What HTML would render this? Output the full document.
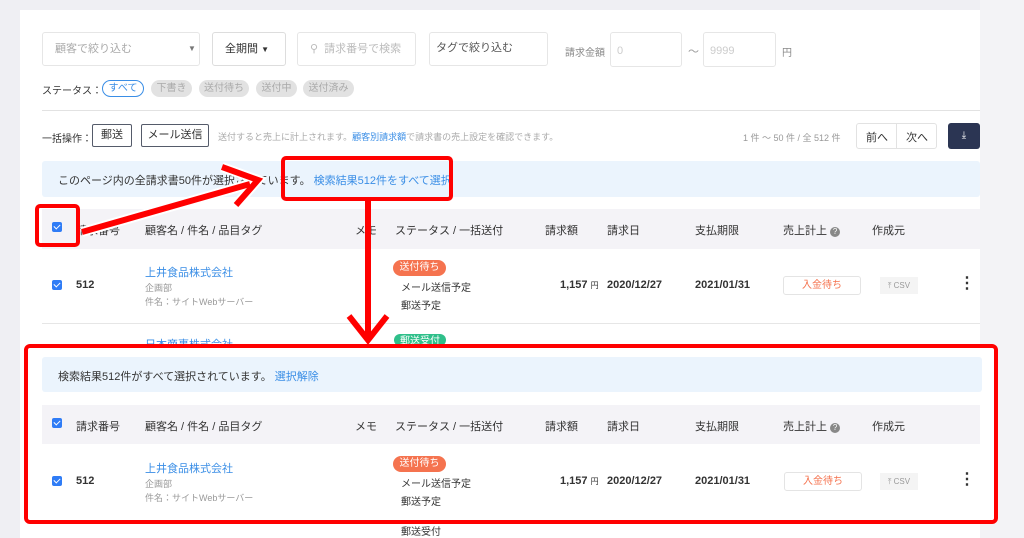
<!DOCTYPE html>
<html><head><meta charset="utf-8"><style>
*{margin:0;padding:0;box-sizing:border-box}
body{width:1024px;height:538px;overflow:hidden;background:#efeff3;font-family:"Liberation Sans","Noto Sans CJK JP",sans-serif;color:#333;position:relative}
.a{position:absolute;white-space:nowrap}
.card{position:absolute;left:20px;top:10px;width:960px;height:528px;background:#fff}
.inp{position:absolute;border:1px solid #e6e6e6;border-radius:3px;background:#fff;font-size:11px;color:#aaa;line-height:32px;padding-left:12px}
.pill{position:absolute;top:80px;height:17px;border-radius:9px;background:#e2e2e2;color:#aaa;font-size:10px;line-height:17px;text-align:center}
.btn{position:absolute;border:1px solid #555b6a;border-radius:2px;font-size:11px;line-height:21px;text-align:center;color:#333}
.cb{position:absolute;width:10px;height:10px;background:#2f7cf6;border-radius:2px}
.cb:after{content:"";position:absolute;left:3px;top:1px;width:3px;height:5px;border:solid #fff;border-width:0 1.5px 1.5px 0;transform:rotate(45deg)}
.th{font-size:11px;color:#333}
.badge{position:absolute;height:16px;border-radius:8px;color:#fff;font-size:10px;line-height:16px;text-align:center}
.sm{font-size:10px;color:#333}
.g{font-size:9px;color:#999}
.link{color:#3a8ee6}
</style></head><body>
<div class="card"></div>
<div style="position:absolute;left:980px;top:0;width:44px;height:538px;background:#f3f3f6"></div>

<div class="inp" style="left:42px;top:32px;width:158px;height:34px">顧客で絞り込む<span class="a" style="left:145px;top:0;font-size:8px;color:#777">▼</span></div>
<div class="inp" style="left:212px;top:32px;width:74px;height:34px;color:#333;border-color:#ddd">全期間 <span style="font-size:8px">▼</span></div>
<div class="inp" style="left:297px;top:32px;width:119px;height:34px;color:#bbb">⚲&nbsp; 請求番号で検索</div>
<div class="inp" style="left:429px;top:32px;width:119px;height:34px;color:#555;padding-left:6px;line-height:30px">タグで絞り込む</div>
<span class="a" style="left:565px;top:44px;font-size:10px;color:#888">請求金額</span>
<div class="inp" style="left:610px;top:32px;width:72px;height:35px;color:#ccc;padding-left:6px;line-height:36px">0</div>
<span class="a" style="left:688px;top:43px;font-size:11px;color:#999">～</span>
<div class="inp" style="left:703px;top:32px;width:73px;height:35px;color:#ccc;padding-left:6px;line-height:36px">9999</div>
<span class="a" style="left:782px;top:44px;font-size:10px;color:#888">円</span>

<span class="a" style="left:42px;top:82px;font-size:10px;color:#333">ステータス：</span>
<div class="pill" style="left:102px;width:42px;background:#fff;border:1px solid #3a8ee6;color:#3a8ee6;line-height:15px">すべて</div>
<div class="pill" style="left:151px;width:41px">下書き</div>
<div class="pill" style="left:199px;width:50px">送付待ち</div>
<div class="pill" style="left:256px;width:41px">送付中</div>
<div class="pill" style="left:303px;width:51px">送付済み</div>
<div class="a" style="left:42px;top:110px;width:938px;height:1px;background:#e2e2e2"></div>

<span class="a" style="left:42px;top:130px;font-size:10px">一括操作：</span>
<div class="btn" style="left:92px;top:124px;width:40px;height:23px">郵送</div>
<div class="btn" style="left:141px;top:124px;width:68px;height:23px">メール送信</div>
<span class="a" style="left:218px;top:130px;font-size:9px;color:#aaa">送付すると売上に計上されます。<span class="link">顧客別請求額</span>で請求書の売上設定を確認できます。</span>
<span class="a" style="left:743px;top:131px;font-size:9px;color:#999">1 件 〜 50 件 / 全 512 件</span>
<div class="a" style="left:856px;top:123px;width:81px;height:26px;border:1px solid #e2e2e2;border-radius:3px"></div>
<div class="a" style="left:896px;top:123px;width:1px;height:26px;background:#e2e2e2"></div>
<span class="a" style="left:866px;top:129px;font-size:11px">前へ</span>
<span class="a" style="left:906px;top:129px;font-size:11px">次へ</span>
<div class="a" style="left:948px;top:123px;width:32px;height:26px;background:#2b3553;border-radius:3px;color:#fff;font-size:10px;text-align:center;line-height:26px">⤓</div>

<div class="a" style="left:42px;top:161px;width:938px;height:36px;background:#ebf4fd;border-radius:3px"></div>
<span class="a" style="left:58px;top:172px;font-size:11px">このページ内の全請求書50件が選択されています。 <span class="link">検索結果512件をすべて選択</span></span>

<div class="a" style="left:42px;top:209px;width:938px;height:40px;background:#f4f3f7"></div>
<div class="cb" style="left:52px;top:222px"></div>
<span class="a th" style="left:76px;top:222px">請求番号</span>
<span class="a th" style="left:145px;top:222px">顧客名 / 件名 / 品目タグ</span>
<span class="a th" style="left:355px;top:222px">メモ</span>
<span class="a th" style="left:395px;top:222px">ステータス / 一括送付</span>
<span class="a th" style="left:545px;top:222px">請求額</span>
<span class="a th" style="left:607px;top:222px">請求日</span>
<span class="a th" style="left:695px;top:222px">支払期限</span>
<span class="a th" style="left:783px;top:222px">売上計上 <span style="display:inline-block;width:10px;height:10px;border-radius:50%;background:#888;color:#fff;font-size:8px;text-align:center;line-height:10px">?</span></span>
<span class="a th" style="left:872px;top:222px">作成元</span>

<div class="cb" style="left:52px;top:280px"></div>
<span class="a" style="left:76px;top:279px;font-size:11px;font-weight:bold">512</span>
<span class="a link" style="left:145px;top:264px;font-size:11px">上井食品株式会社</span>
<span class="a g" style="left:145px;top:281px">企画部</span>
<span class="a g" style="left:145px;top:295px">件名：サイトWebサーバー</span>
<div class="badge" style="left:393px;top:260px;width:53px;background:#f5734f">送付待ち</div>
<span class="a sm" style="left:401px;top:279px">メール送信予定</span>
<span class="a sm" style="left:401px;top:297px">郵送予定</span>
<span class="a" style="left:560px;top:279px;font-size:11px;font-weight:bold;color:#333">1,157 <span style="font-size:8px;font-weight:normal">円</span></span>
<span class="a" style="left:607px;top:279px;font-size:11px;font-weight:bold;color:#333">2020/12/27</span>
<span class="a" style="left:695px;top:279px;font-size:11px;font-weight:bold;color:#333">2021/01/31</span>
<div class="a" style="left:783px;top:276px;width:78px;height:19px;border:1px solid #e4e4e4;border-radius:3px;color:#f5734f;font-size:10px;text-align:center;line-height:17px">入金待ち</div>
<div class="a" style="left:880px;top:277px;width:38px;height:17px;background:#f4f4f4;color:#999;font-size:8px;text-align:center;line-height:17px">⤒ CSV</div>
<span class="a" style="left:959px;top:274px;font-size:16px;font-weight:bold;line-height:20px">⋮</span>
<div class="a" style="left:42px;top:323px;width:938px;height:1px;background:#e6e6e6"></div>
<div class="badge" style="left:394px;top:334px;width:52px;background:#2fbf8a;height:12px">郵送受付</div>
<span class="a link" style="left:145px;top:336px;font-size:11px;height:8px;overflow:hidden">日本商事株式会社</span>

<div class="a" style="left:24px;top:344px;width:974px;height:180px;border:4px solid #f00;border-radius:6px;background:#fff"></div>
<div class="a" style="left:42px;top:357px;width:940px;height:35px;background:#ebf4fd;border-radius:3px"></div>
<span class="a" style="left:58px;top:368px;font-size:11px">検索結果512件がすべて選択されています。 <span class="link">選択解除</span></span>
<div class="a" style="left:42px;top:405px;width:938px;height:39px;background:#f4f3f7"></div>
<div class="cb" style="left:52px;top:418px"></div>
<span class="a th" style="left:76px;top:418px">請求番号</span>
<span class="a th" style="left:145px;top:418px">顧客名 / 件名 / 品目タグ</span>
<span class="a th" style="left:355px;top:418px">メモ</span>
<span class="a th" style="left:395px;top:418px">ステータス / 一括送付</span>
<span class="a th" style="left:545px;top:418px">請求額</span>
<span class="a th" style="left:607px;top:418px">請求日</span>
<span class="a th" style="left:695px;top:418px">支払期限</span>
<span class="a th" style="left:783px;top:418px">売上計上 <span style="display:inline-block;width:10px;height:10px;border-radius:50%;background:#888;color:#fff;font-size:8px;text-align:center;line-height:10px">?</span></span>
<span class="a th" style="left:872px;top:418px">作成元</span>
<div class="cb" style="left:52px;top:476px"></div>
<span class="a" style="left:76px;top:475px;font-size:11px;font-weight:bold">512</span>
<span class="a link" style="left:145px;top:460px;font-size:11px">上井食品株式会社</span>
<span class="a g" style="left:145px;top:477px">企画部</span>
<span class="a g" style="left:145px;top:491px">件名：サイトWebサーバー</span>
<div class="badge" style="left:393px;top:456px;width:53px;background:#f5734f">送付待ち</div>
<span class="a sm" style="left:401px;top:475px">メール送信予定</span>
<span class="a sm" style="left:401px;top:493px">郵送予定</span>
<span class="a" style="left:560px;top:475px;font-size:11px;font-weight:bold">1,157 <span style="font-size:8px;font-weight:normal">円</span></span>
<span class="a" style="left:607px;top:475px;font-size:11px;font-weight:bold">2020/12/27</span>
<span class="a" style="left:695px;top:475px;font-size:11px;font-weight:bold">2021/01/31</span>
<div class="a" style="left:784px;top:472px;width:78px;height:19px;border:1px solid #e4e4e4;border-radius:3px;color:#f5734f;font-size:10px;text-align:center;line-height:17px">入金待ち</div>
<div class="a" style="left:880px;top:473px;width:38px;height:17px;background:#f4f4f4;color:#999;font-size:8px;text-align:center;line-height:17px">⤒ CSV</div>
<span class="a" style="left:959px;top:470px;font-size:16px;font-weight:bold;line-height:20px">⋮</span>
<span class="a sm" style="left:401px;top:523px">郵送受付</span>

<div class="a" style="left:281px;top:156px;width:172px;height:45px;border:4px solid #f00;border-radius:5px"></div>
<div class="a" style="left:35px;top:204px;width:45px;height:43px;border:4px solid #f00;border-radius:5px"></div>
<svg class="a" style="left:0;top:0" width="1024" height="538">
 <g stroke="#fff" stroke-width="10" fill="none">
  <line x1="82" y1="232" x2="250" y2="184"/>
  <polyline points="222,167 258,180 236,205"/>
 </g>
 <g stroke="#f00" stroke-width="6" fill="none">
  <line x1="82" y1="232" x2="250" y2="184"/>
  <polyline points="222,167 258,180 236,205"/>
  <line x1="368" y1="201" x2="368" y2="338"/>
  <polyline points="349,316 368,340 387,316"/>
 </g>
</svg>
</body></html>
